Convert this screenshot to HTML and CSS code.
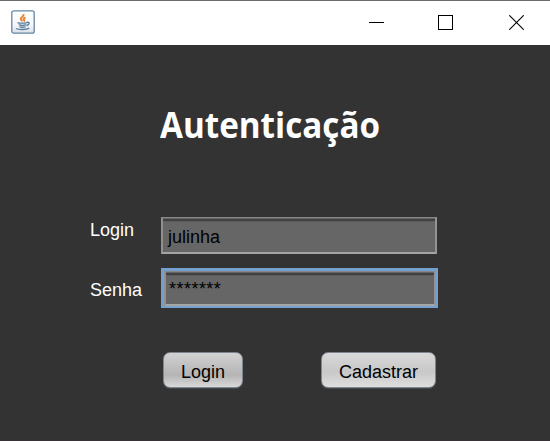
FILE: index.html
```
<!DOCTYPE html>
<html lang="pt-BR">
<head>
<meta charset="utf-8">
<title>Autenticação</title>
<link rel="stylesheet" href="styles.css">
</head>
<body>
<div class="window">
  <header class="titlebar">
    <svg class="java" width="24" height="24" viewBox="0 0 24 24" fill="none">
      <defs><linearGradient id="tile" x2="0" y2="1"><stop offset="0" stop-color="#fff"/><stop offset=".6" stop-color="#f7f8fa"/><stop offset="1" stop-color="#dce1e8"/></linearGradient></defs>
      <rect x=".8" y=".8" width="22.4" height="22.4" rx="2" fill="url(#tile)" stroke="#6486a3" stroke-width="1.3"/>
      <path d="M12.600 4c.6 2.600-3.600 3.200-2.800 5.200.2.700 1.200 1.200 1.400 2.200M14.500 7.500c-2.200.8-2.400 1.800-1.200 2.800.3.500 0 .8-.5 1.200" stroke="#e98132" stroke-width="1.900"/>
      <path d="M6.500 12.600c2 .8 7.500.7 9.500 0M7.700 14.700c2 .8 5.500.8 7.300 0M8.500 16.700c1.500.7 4.500.7 6 0M16 12.300c3-.6 2.800 2.200-.6 3.200M5 18.500c2.500 1.500 10.500 1.400 13.200-.3" stroke="#557d9d" stroke-width="1.400"/>
    </svg>
    <nav class="controls">
      <svg width="15" height="15" shape-rendering="crispEdges"><path d="M0 7.500h15" stroke="#000"/></svg>
      <svg width="15" height="15" shape-rendering="crispEdges"><path d="M.5.500h14v14H.5z" fill="none" stroke="#000"/></svg>
      <svg width="15" height="15"><path d="M.3.300l14.400 14.400M14.700.300L.3 14.700" stroke="#000" stroke-width="1.100"/></svg>
    </nav>
  </header>
  <main class="content">
    <h1 class="title">Autenticação</h1>
    <form class="form">
      <div class="row">
        <label class="label">Login</label>
        <div class="field"><span>julinha</span></div>
      </div>
      <div class="row row-focus">
        <label class="label">Senha</label>
        <div class="focus"><div class="field"><span class="stars">*******</span></div></div>
      </div>
      <div class="actions">
        <button class="button login" type="button">Login</button>
        <button class="button cadastrar" type="button">Cadastrar</button>
      </div>
    </form>
  </main>
</div>
</body>
</html>
```
FILE: styles.css
```
* { box-sizing: border-box; }
body { margin: 0; overflow: hidden; font-family: "Liberation Sans", Arial, sans-serif; }
.window { width: 550px; height: 441px; display: flex; flex-direction: column; background: #333; }
.titlebar { height: 45px; flex: none; display: flex; align-items: center; justify-content: space-between; padding: 0 26px 2px 11px; background: #fff; border-top: 1px solid #6b6b6b; }
.controls { display: flex; gap: 54px; }
.controls svg:nth-child(3) { margin-left: 2px; }
.content { flex: 1; display: flex; flex-direction: column; border-bottom: 2px solid #373236; }
.title { margin: 56px 0 0 160px; height: 50px; font: bold 35px/47px "Open Sans", "Noto Sans", sans-serif; color: #fff; white-space: nowrap; transform: scaleX(.949); transform-origin: 0 0; }
.form { display: flex; flex-direction: column; margin-top: 66px; padding-left: 90px; font-size: 18px; }
.row { display: flex; height: 37px; }
.row-focus { margin-top: 14px; height: 40px; }
.label { width: 71px; color: #fff; line-height: 20px; padding-top: 3px; }
.row-focus .label { padding-top: 12px; }
.field { width: 276px; height: 37px; display: flex; align-items: center; padding: 5px 0 0 5px; color: #000; background: linear-gradient(#666 0 1px, #414141 1px 3px, #5c5c5c 3px 4px, #666 4px); border: 2px solid #949494; border-width: 1px 2px 2px; border-color: #858585 #949494 #a5a5a5 #909090; }
.focus { width: 277px; height: 40px; padding: 3px 2px 2px 3px; background: #73a0cf; }
.focus .field { width: 272px; height: 35px; padding: 3px 0 0 3px; }
.stars { letter-spacing: .47px; }
.actions { display: flex; margin: 44px 0 0 73px; gap: 78px; }
.button { height: 36px; padding: 3px 0 0; font: 18px/20px "Liberation Sans", Arial, sans-serif; color: #000; border: 1px solid #7f858d; border-radius: 7px; background: linear-gradient(#d9d9d9, #cbcbcb 45%, #c8c8c8 55%, #dedede); box-shadow: 0 1px 1px #46494c; }
.login { width: 80px; background: linear-gradient(#d2d2d2, #bdbdbd 45%, #b5b5b5 65%, #d9d9d9); }
.cadastrar { width: 115px; }
```
